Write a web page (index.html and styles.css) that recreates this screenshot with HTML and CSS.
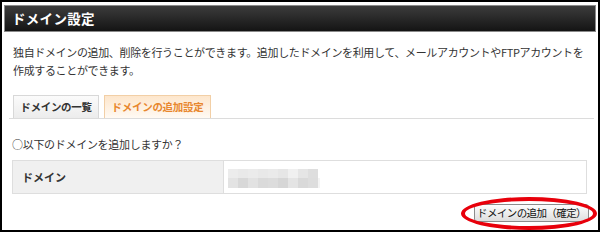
FILE: index.html
```html
<!DOCTYPE html>
<html lang="ja">
<head>
<meta charset="utf-8">
<link rel="stylesheet" href="styles.css">
</head>
<body>
<div class="frame">
  <div class="header">ドメイン設定</div>
  <div class="content">
    <p class="desc">独自ドメインの追加、削除を行うことができます。追加したドメインを利用して、メールアカウントやFTPアカウントを<br>作成することができます。</p>
    <div class="tabs">
      <div class="tab">ドメインの一覧</div>
      <div class="tab active">ドメインの追加設定</div>
    </div>
    <p class="question">○以下のドメインを追加しますか？</p>
    <div class="table">
      <div class="th">ドメイン</div>
      <div class="td">
        <svg class="blur" width="92" height="19" viewBox="0 0 92 19">
          <rect x="0" y="0" width="10" height="9" fill="#ececec"/>
          <rect x="10" y="0" width="10" height="9" fill="#e9e9e9"/>
          <rect x="20" y="0" width="10" height="9" fill="#ebebeb"/>
          <rect x="30" y="0" width="10" height="9" fill="#e8e8e8"/>
          <rect x="40" y="0" width="10" height="9" fill="#eaeaea"/>
          <rect x="50" y="0" width="10" height="9" fill="#e6e6e6"/>
          <rect x="60" y="0" width="10" height="9" fill="#f0f0f0"/>
          <rect x="70" y="0" width="10" height="9" fill="#e5e5e5"/>
          <rect x="80" y="0" width="10" height="9" fill="#dedede"/>
          <rect x="0" y="9" width="10" height="10" fill="#e3e3e3"/>
          <rect x="10" y="9" width="10" height="10" fill="#d8d8d8"/>
          <rect x="20" y="9" width="10" height="10" fill="#e2e2e2"/>
          <rect x="30" y="9" width="10" height="10" fill="#dadada"/>
          <rect x="40" y="9" width="10" height="10" fill="#dcdcdc"/>
          <rect x="50" y="9" width="10" height="10" fill="#d6d6d6"/>
          <rect x="60" y="9" width="10" height="10" fill="#e4e4e4"/>
          <rect x="70" y="9" width="10" height="10" fill="#d9d9d9"/>
          <rect x="80" y="9" width="10" height="10" fill="#dddddd"/>
          <rect x="90" y="9" width="2" height="10" fill="#f4f4f4"/>
        </svg>
      </div>
    </div>
    <div class="actions">
      <button class="btn">ドメインの追加（確定）</button>
      <span class="ring"></span>
    </div>
  </div>
</div>
</body>
</html>
```
FILE: styles.css
```css
html, body {
  margin: 0;
  padding: 0;
  background: #fff;
}
body {
  font-family: "Noto Sans CJK JP", "Noto Sans", sans-serif;
  color: #333;
}
.frame {
  width: 600px;
  height: 232px;
  box-sizing: border-box;
  border: 2px solid #000;
  padding: 3px 2px 0 2px;
  overflow: hidden;
  position: relative;
}
.header {
  height: 27px;
  box-sizing: border-box;
  border: 1px solid #8a8a8a;
  background: linear-gradient(#3c3c3c, #141414);
  color: #fff;
  font-weight: bold;
  font-size: 13.5px;
  line-height: 25px;
  padding-left: 7px;
  letter-spacing: 0.3px;
}
.content {
  padding: 0 8px;
}
.desc {
  margin: 11px 0 0 1px;
  font-size: 11px;
  line-height: 18px;
  letter-spacing: -0.35px;
  white-space: nowrap;
  color: #333;
}
.tabs {
  margin: 16px -6px 0 -3px;
  padding-left: 4px;
  display: flex;
  gap: 5px;
  border-bottom: 1px solid #dcdcdc;
  height: 23px;
}
.tab {
  width: 86px;
  box-sizing: border-box;
  border: 1px solid #d8d8d8;
  border-bottom: none;
  background: linear-gradient(#fbfbfb, #ececec);
  font-size: 10.5px;
  font-weight: bold;
  line-height: 22px;
  text-align: center;
  color: #333;
  letter-spacing: -0.3px;
}
.tab.active {
  width: 107px;
  border-color: #f2cfa6;
  background: linear-gradient(#fde6cc, #fffaf4);
  color: #e8872e;
}
.question {
  margin: 16px 0 0 0;
  font-size: 11px;
  line-height: 18px;
  letter-spacing: -0.3px;
  white-space: nowrap;
}
.table {
  margin-top: 7px;
  display: flex;
  height: 34px;
  box-sizing: border-box;
  border: 1px solid #dedede;
  margin-right: 1px;
}
.th {
  width: 211px;
  background: #f0f0f0;
  border-right: 1px solid #dedede;
  font-size: 11px;
  font-weight: bold;
  line-height: 32px;
  padding-left: 9px;
  box-sizing: border-box;
}
.td {
  flex: 1;
  display: flex;
  align-items: center;
  padding-left: 4px;
}
.blur {
  display: block;
  margin-top: 3px;
}
.actions {
  display: flex;
  justify-content: flex-end;
  margin-top: 10px;
  position: relative;
}
.btn {
  width: 115px;
  height: 18px;
  margin-right: -1px;
  padding: 0;
  border: 1px solid #8c8c8c;
  border-radius: 3px;
  background: linear-gradient(#fdfdfd, #dedede);
  font-family: "Noto Sans CJK JP", sans-serif;
  font-size: 10.5px;
  line-height: 16px;
  color: #111;
  letter-spacing: -0.6px;
  white-space: nowrap;
}
.ring {
  position: absolute;
  right: -9px;
  top: -7px;
  width: 136px;
  height: 33px;
  box-sizing: border-box;
  border: 4px solid #e8000b;
  border-radius: 50%;
}
```
